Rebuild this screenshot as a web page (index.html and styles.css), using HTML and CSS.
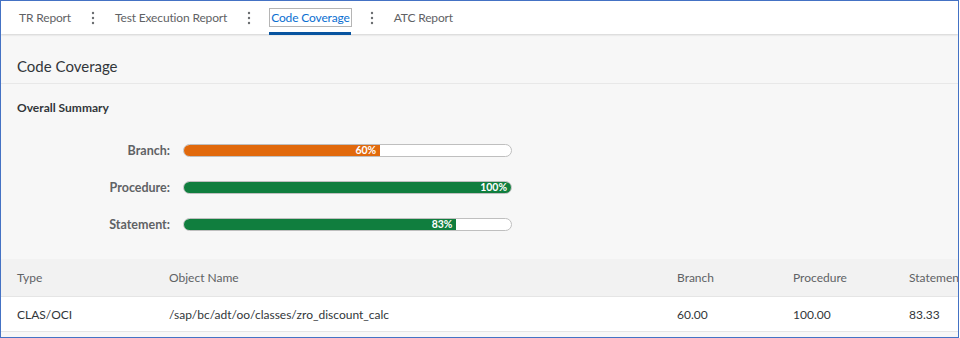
FILE: index.html
```html
<!DOCTYPE html>
<html lang="en">
<head>
    <meta charset="UTF-8">
    <title>Code Coverage</title>
    <link rel="stylesheet" href="styles.css">
</head>
<body>
    <div class="frame">
        <div class="tabbar">
            <div class="tab">TR Report</div>
            <div class="sep"><svg width="4" height="16" viewBox="0 0 4 16"><circle cx="2" cy="3" r="1.2"/><circle cx="2" cy="8" r="1.2"/><circle cx="2" cy="13" r="1.2"/></svg></div>
            <div class="tab">Test Execution Report</div>
            <div class="sep"><svg width="4" height="16" viewBox="0 0 4 16"><circle cx="2" cy="3" r="1.2"/><circle cx="2" cy="8" r="1.2"/><circle cx="2" cy="13" r="1.2"/></svg></div>
            <div class="tab active"><span class="focus">Code Coverage</span></div>
            <div class="sep"><svg width="4" height="16" viewBox="0 0 4 16"><circle cx="2" cy="3" r="1.2"/><circle cx="2" cy="8" r="1.2"/><circle cx="2" cy="13" r="1.2"/></svg></div>
            <div class="tab">ATC Report</div>
        </div>

        <div class="content">
            <div class="page-title">Code Coverage</div>

            <div class="summary">
                <h3>Overall Summary</h3>
                <div class="bars">
                    <div class="bar-label">Branch:</div>
                    <div class="bar"><div class="fill orange" style="width: 60%">60%</div></div>
                    <div class="bar-label">Procedure:</div>
                    <div class="bar"><div class="fill green" style="width: 100%">100%</div></div>
                    <div class="bar-label">Statement:</div>
                    <div class="bar"><div class="fill green" style="width: 83.33%">83%</div></div>
                </div>
            </div>

            <table class="results">
                <thead>
                    <tr>
                        <th class="c-type">Type</th>
                        <th class="c-name">Object Name</th>
                        <th class="c-num">Branch</th>
                        <th class="c-num">Procedure</th>
                        <th class="c-last">Statement</th>
                    </tr>
                </thead>
                <tbody>
                    <tr>
                        <td>CLAS/OCI</td>
                        <td>/sap/bc/adt/oo/classes/zro_discount_calc</td>
                        <td>60.00</td>
                        <td>100.00</td>
                        <td>83.33</td>
                    </tr>
                </tbody>
            </table>
        </div>
    </div>
</body>
</html>
```

FILE: styles.css
```css
body {
    margin: 0;
    padding: 0;
    font-family: Lato, "Open Sans", Arial, sans-serif;
    color: #32363a;
    background-color: #fff;
}
.frame {
    width: 957px;
    height: 336px;
    border: 1px solid #4472c4;
    overflow: hidden;
    background-color: #f7f7f7;
}
.tabbar {
    display: flex;
    align-items: center;
    height: 33px;
    padding-left: 18px;
    background-color: #fff;
    box-shadow: 0 1px 2px rgba(0, 0, 0, 0.15);
    position: relative;
    font-size: 12px;
    letter-spacing: -0.15px;
}
.tab {
    color: #5f6265;
    height: 33px;
    line-height: 33px;
    position: relative;
}
.tab.active {
    color: #0a6ed1;
}
.tab.active::after {
    content: "";
    position: absolute;
    left: -2px;
    right: -1px;
    bottom: -1px;
    height: 3px;
    background-color: #0854a0;
}
.focus {
    border: 1px solid #b5b5b5;
    padding: 1px 1px;
    margin: 0 -2px;
}
.sep {
    width: 44px;
    display: flex;
    justify-content: center;
    fill: #6a6d70;
}
.content {
    padding-top: 1px;
}
.page-title {
    font-size: 15px;
    line-height: 22px;
    padding: 20px 16px 6px;
    border-bottom: 1px solid #e8e8e8;
}
.summary {
    padding: 16px 16px 16px 16px;
}
.summary h3 {
    margin: 0;
    font-size: 12px;
    line-height: 16px;
    font-weight: 700;
}
.bars {
    display: grid;
    grid-template-columns: 153px 329px;
    grid-auto-rows: 37px;
    column-gap: 13px;
    align-items: center;
    margin-top: 16px;
}
.bar-label {
    text-align: right;
    font-size: 12.5px;
    font-weight: 700;
    color: #5f6265;
}
.bar {
    height: 11px;
    border: 1px solid #bfbfbf;
    border-radius: 7px;
    background-color: #fff;
    overflow: hidden;
    display: flex;
}
.fill {
    height: 100%;
    box-sizing: border-box;
    color: #fff;
    font-size: 10.5px;
    font-weight: 700;
    line-height: 11px;
    text-align: right;
    padding-right: 4px;
}
.orange {
    background-color: #e1690c;
}
.green {
    background-color: #107e3e;
}
.results {
    border-collapse: collapse;
    table-layout: fixed;
    width: 1000px;
    font-size: 12px;
}
.results th {
    background-color: #f2f2f2;
    font-weight: 400;
    color: #5f6265;
    height: 37px;
    text-align: left;
    padding: 0 0 0 16px;
    border-bottom: 1px solid #e5e5e5;
}
.results td {
    background-color: #fff;
    height: 34px;
    padding: 0 0 0 16px;
    border-bottom: 1px solid #e5e5e5;
}
.c-type {
    width: 136px;
}
.c-name {
    width: 492px;
}
.c-num {
    width: 100px;
}
```
